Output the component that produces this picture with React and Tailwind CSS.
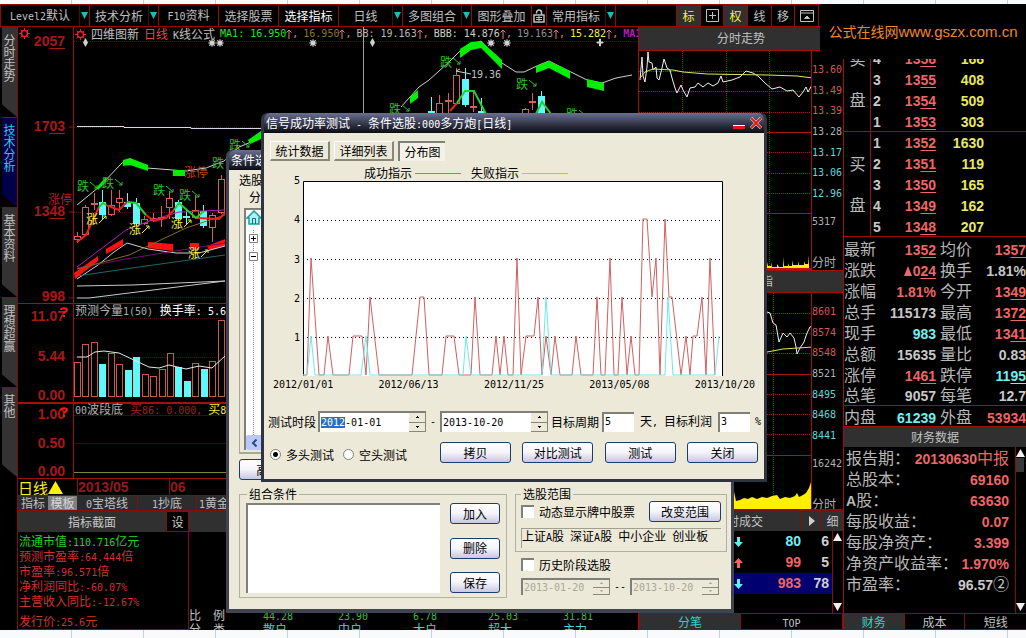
import { useEffect, useRef } from "react";
import clsx from "clsx";

const TOOLBAR_MENUS = [
    { label: "Level2默认", width: "w-[89px]", arrow: true },
    { label: "技术分析", width: "w-[69px]", arrow: true },
    { label: "F10资料", width: "w-[60px]" },
    { label: "选择股票", width: "w-[60px]" },
    { label: "选择指标", width: "w-[60px]", active: true },
    { label: "日线", width: "w-[64px]", arrow: true },
    { label: "多图组合", width: "w-[69px]", arrow: true },
    { label: "图形叠加", width: "w-[60px]" },
];

const SIDE_TABS = ["分时走势", "技术分析", "基本资料", "理想超赢", "其他"];

const MA_VALUES = [
    { name: "MA1: ", value: "16.950", color: "text-[#2ee02e]" },
    { value: "16.950", color: "text-[#8a7a2a]" },
    { name: "BB: ", value: "19.163", color: "text-[#b8b8b8]" },
    { name: "BBB: ", value: "14.876", color: "text-[#c8d0c8]" },
    { value: "19.163", color: "text-[#909090]" },
    { value: "15.282", color: "text-[#f0f040]" },
];

// [x, wick top, wick bottom, body top, body bottom, up?]
const CANDLES = [
    [75, 232, 243, 236, 240, true],
    [83, 205, 236, 207, 235, true],
    [92, 193, 210, 203, 205, true],
    [100, 190, 220, 202, 215, false],
    [109, 190, 216, 205, 215, true],
    [117, 190, 212, 198, 203, true],
    [125, 193, 209, 202, 207, false],
    [134, 198, 226, 203, 224, false],
    [142, 216, 225, 219, 224, true],
    [151, 213, 222, 218, 221, true],
    [159, 206, 227, 217, 219, true],
    [167, 191, 219, 198, 208, true],
    [176, 200, 220, 202, 219, false],
    [184, 210, 224, 216, 218, false],
    [193, 195, 219, 210, 218, true],
    [201, 205, 228, 211, 226, false],
    [210, 213, 242, 215, 228, true],
    [219, 175, 214, 179, 213, true],
    [429, 97, 114, 111, 114, false],
    [437, 95, 114, 103, 114, true],
    [446, 93, 114, 100, 102, true],
    [454, 68, 105, 75, 104, true],
    [463, 68, 107, 79, 105, false],
    [471, 92, 112, 106, 108, true],
    [479, 98, 114, 111, 114, false],
    [523, 108, 114, 109, 114, true],
    [530, 93, 110, 101, 103, true],
    [539, 91, 114, 96, 114, false],
];

const VOLUMES = [
    [361, true], [343, true], [341, true], [363, false], [352, true], [363, true],
    [369, false], [356, false], [373, true], [375, true], [368, true], [352, true],
    [366, false], [380, false], [362, true], [368, false], [360, true], [319, true],
];

const SUCCESS = [
    [304, 0], [308, 0], [312, 3], [320, 0], [325, 0], [329, 1], [334, 0], [350, 0], [354, 1], [363, 1],
    [367, 0], [371, 2], [380, 0], [413, 0], [421, 2], [425, 2], [430, 0], [443, 0], [447, 1], [455, 1],
    [460, 0], [472, 0], [476, 2], [481, 0], [493, 0], [497, 1], [501, 0], [505, 1], [509, 0], [514, 0],
    [518, 3], [522, 0], [527, 1], [535, 1], [539, 2], [543, 0], [547, 1], [552, 0], [556, 1], [561, 0],
    [573, 0], [577, 1], [582, 0], [594, 0], [598, 2], [602, 0], [606, 0], [611, 3], [615, 0], [619, 0],
    [623, 2], [628, 0], [632, 1], [636, 0], [640, 0], [644, 4], [648, 4], [653, 2], [657, 3], [661, 0],
    [666, 4], [670, 2], [673, 2], [682, 0], [687, 1], [691, 0], [694, 1], [698, 1], [703, 2], [707, 0],
    [711, 3], [716, 0],
];

const FAILURE = [
    [304, 0], [308, 0], [312, 1], [316, 0], [362, 0], [367, 1], [371, 0], [464, 0], [467, 1], [472, 0],
    [543, 0], [547, 2], [552, 0], [666, 0], [669, 2], [674, 0], [716, 0], [720, 1],
];

const SELLS = [
    [5, "1357", "92"],
    [4, "1356", "166"],
    [3, "1355", "408"],
    [2, "1354", "509"],
    [1, "1353", "303"],
];

const BUYS = [
    [1, "1352", "1630"],
    [2, "1351", "119"],
    [3, "1350", "165"],
    [4, "1349", "162"],
    [5, "1348", "207"],
];

const RED = "text-[#ee6666]";
const CYAN = "text-[#70f0f0]";
const GRAY = "text-[#c8c8c8]";

const QUOTES = [
    ["最新", "1352", RED, true, "均价", "1357", RED, true],
    ["涨跌", "▲024", RED, true, "换手", "1.81%", GRAY, false],
    ["涨幅", "1.81%", RED, false, "今开", "1349", RED, true],
    ["总手", "115173", GRAY, false, "最高", "1372", RED, true],
    ["现手", "983", CYAN, false, "最低", "1341", RED, true],
    ["总额", "15635", GRAY, false, "量比", "0.83", GRAY, false],
    ["涨停", "1461", RED, true, "跌停", "1195", CYAN, true],
    ["总笔", "9057", GRAY, false, "每笔", "12.7", GRAY, false],
    ["内盘", "61239", CYAN, false, "外盘", "53934", RED, false],
];

const FINANCE = [
    ["报告期：", "20130630中报", RED],
    ["总股本：", "69160", RED],
    ["A股：", "63630", RED],
    ["每股收益：", "0.07", RED],
    ["每股净资产：", "3.399", RED],
    ["净资产收益率：", "1.970%", RED],
    ["市盈率：", "96.57②", GRAY],
];

const MONO = "font-['DejaVu_Sans_Mono',monospace] text-[10px]";
const BIG = "font-['Liberation_Sans',sans-serif] text-[14px] font-bold";

// Chinese text keeps its own size, latin runs get a narrower face
function Mix({ children, latin = MONO }) {
    return (
        <span className="whitespace-pre">
            {children.split(/([\x20-\x7e]+)/).map((part, i) =>
                i % 2 ? <span key={i} className={clsx("leading-none", latin)}>{part}</span> : part
            )}
        </span>
    );
}

// Prices underline the last two digits
function Price({ value, mark }) {
    if (!mark) return <Mix latin={BIG}>{value}</Mix>;
    const rising = value.startsWith("▲");
    const digits = rising ? value.slice(1) : value;
    return (
        <>
            {rising && (
                <svg width="8" height="10" viewBox="0 0 8 10" className="mr-px inline-block align-baseline" aria-label="上涨">
                    <path d="M4 0L8 10H0z" fill="#ee6666" />
                </svg>
            )}
            <Mix latin={BIG}>{digits.slice(0, -2)}</Mix>
            <span className={clsx(BIG, "leading-none underline decoration-1 underline-offset-2")}>{digits.slice(-2)}</span>
        </>
    );
}

function GearIcon() {
    return (
        <svg width="11" height="11" viewBox="0 0 11 11" fill="none" stroke="#f02020" className="shrink-0">
            <circle cx="5.500" cy="5.500" r="3" strokeWidth="1.500" />
            <path d="M5.500 0v2M5.500 9v2M0 5.500h2M9 5.500h2M1.500 1.500l1.500 1.500M8 8l1.500 1.500M9.500 1.500L8 3M3 8l-1.500 1.500" />
        </svg>
    );
}

function LockIcon() {
    return (
        <svg width="12" height="14" viewBox="0 0 12 14" fill="none" stroke="#c0c0c0">
            <path d="M3.500 4.500V3.500A2.500 2.500 0 0 1 8.500 3.500V6" strokeWidth="1.500" />
            <rect x="1" y="6" width="10" height="7" strokeWidth="1.500" />
            <path d="M3 8.500h6M3 10.500h6M6 7v5" />
        </svg>
    );
}

function DropArrow() {
    return (
        <span className="flex h-full w-[10px] items-center justify-center border-l border-[#500808]">
            <svg width="7" height="7" viewBox="0 0 7 7"><path d="M0 0h7L3.500 7z" fill="#20b8b8" /></svg>
        </span>
    );
}

function Toolbar() {
    const cell = "flex items-center justify-center border-r border-[#980808]";
    return (
        <header className="flex h-[23px] border border-[#980808] bg-black text-[12px] leading-none text-[#c0c0c0]">
            {TOOLBAR_MENUS.map((m) => (
                <button key={m.label} className={clsx("flex border-r border-[#980808]", m.width, m.active && "text-white")}>
                    <span className="flex h-full flex-1 items-center justify-center"><Mix>{m.label}</Mix></span>
                    {m.arrow && <DropArrow />}
                </button>
            ))}
            <button className={clsx(cell, "w-[15px]")} aria-label="锁定"><LockIcon /></button>
            <button className="flex w-[69px] border-r border-[#980808]">
                <span className="flex h-full flex-1 items-center justify-center">常用指标</span>
                <DropArrow />
            </button>
            <div className="flex-1 border-r border-[#980808]" />
            <button className={clsx(cell, "w-[24px] bg-[#303030] text-[#f0f040]")}>标</button>
            <button className={clsx(cell, "w-[23px]")} aria-label="网格">
                <svg width="13" height="13" viewBox="0 0 13 13" fill="none" stroke="#c0c0c0"><path d="M.5.500h12v12H.5zM6.500 3v7M3 6.500h7" /></svg>
            </button>
            <button className={clsx(cell, "w-[24px] bg-[#303030] text-[#f0f040]")}>权</button>
            <button className={clsx(cell, "w-[24px]")}>线</button>
            <button className={clsx(cell, "w-[23px]")}>移</button>
            <button className={clsx(cell, "w-[24px]")} aria-label="展开">
                <svg width="14" height="12" viewBox="0 0 14 12" fill="none" stroke="#c0c0c0"><path d="M.5.500h13v11H.5zM.5 3h13" /><path d="M4.500 8.500L7 6l2.500 2.500z" fill="#c0c0c0" /></svg>
            </button>
            <div className="w-[206px]" />
        </header>
    );
}

function Sidebar() {
    return (
        <nav className="flex w-[18px] flex-col border-r border-[#801010] bg-black pl-[2px]">
            {SIDE_TABS.map((tab, i) => (
                <button
                    key={tab}
                    className={clsx(
                        "flex h-[90px] w-full items-start justify-center border-t border-[#801010] pt-[6px] text-[12px] leading-[12px]",
                        "[clip-path:polygon(0_0,100%_0,100%_100%,0_86%)]",
                        i === 1 ? "bg-[#000048] text-[#30c8e8]" : "bg-[#333333] text-[#c0c0c0]"
                    )}
                >
                    <span className="w-[12px] break-all">{tab}</span>
                </button>
            ))}
        </nav>
    );
}

function Axis({ labels, badge, className }) {
    return (
        <div className={clsx("relative flex w-[56px] shrink-0 flex-col items-end justify-between border-r border-[#a01010] pr-[8px] leading-[14px] text-[#a81818]", BIG, className)}>
            {labels.map((l) => (
                <span key={l}>
                    {l.includes(".") || l === "998" ? l : <>{l.slice(0, 2)}<u className="underline-offset-2">{l.slice(2)}</u></>}
                </span>
            ))}
            {badge}
        </div>
    );
}

function HelpBadge() {
    return (
        <svg width="8" height="10" viewBox="0 0 8 10" fill="none" className="absolute top-[3px] right-[5px]" aria-label="帮助">
            <path d="M1 3C1 .5 7 .5 7 3C7 4.500 4 4.500 4 6.500M4 8v2" stroke="#ff1818" strokeWidth="2" />
        </svg>
    );
}

function Note({ x, y, color, children, arrow }) {
    return (
        <>
            <text x={x} y={y} fill={color} fontSize="12">{children}</text>
            {arrow === "down" && <path d={`M${x + 13} ${y - 9}l7 6m-3 0h3v-3`} stroke={color} fill="none" />}
            {arrow === "up" && <path d={`M${x + 13} ${y - 1}l7 -7m-3 0h3v3`} stroke={color} fill="none" />}
        </>
    );
}

function CandleChart() {
    return (
        <svg className="block h-[262px] w-full" aria-label="K线图">
            {/* chart is drawn in page units, moved back to its own corner */}
            <g transform="translate(-75 -41)" fill="none">
                <path d="M75 41.500H640M75 127.500H640M75 212.500H640M75 297.500H640" stroke="#5a0808" strokeDasharray="1 1" />
                <path d="M70 127h5M70 212h5M70 298h5" stroke="#a01010" />
                <path d="M364.500 27V115" stroke="#a0a0a0" />
                <path d="M78 126.500H125V127.500H192V128.500H262" stroke="#d8d8e8" />

                {CANDLES.map(([x, wt, wb, bt, bb, up]) => (
                    <g key={x} stroke={up ? "#d86050" : "#60f8f8"}>
                        <path d={`M${x + 3.5} ${wt}V${bt}M${x + 3.5} ${bb}V${wb}`} />
                        <rect x={x + 0.5} y={bt + 0.5} width="6" height={Math.max(bb - bt - 1, 1)} fill={up ? "#000" : "#60f8f8"} />
                    </g>
                ))}

                <path d="M78 205L100 187L123 163L131 159L148 168L174 170L187 171L207 168L225 161L240 147L262 138" stroke="#d0d0d0" />
                <path d="M402 107L420 87L430 80L450 62L462 50L482 41L503 63L517 72L525 72L540 65L550 61L570 71L588 80L603 83L617 78L633 75" stroke="#d0d0d0" />
                <g fill="#00f000">
                    <path d="M98 187L107 177V182L99 190Z" />
                    <path d="M124 160L131 158L149 165V171L131 165L124 166Z" />
                    <path d="M174 170H186V176H174Z" />
                    <path d="M249 140L262 131V139L251 144Z" />
                    <path d="M411 97L419 90V98L411 104Z" />
                    <path d="M461 49L472 42L482 41L503 60V69L482 48L472 50L461 58Z" />
                    <path d="M537 66L550 61L571 71V79L550 68L537 73Z" />
                    <path d="M588 79L605 83V91L588 87Z" />
                </g>
                <g fill="#ff1010">
                    <path d="M75 273L99 256V261L76 279Z" />
                    <path d="M107 249L124 239V245L107 254Z" />
                    <path d="M149 242L174 244V251L149 248Z" />
                    <path d="M191 243H200V250H191Z" />
                    <path d="M208 246L226 239V246L210 250Z" />
                </g>
                <path d="M78 279L99 265L115 252L128 243L149 249L177 253L200 253L226 246" stroke="#d0d0d0" />
                <path d="M78 267L127 230L153 220L180 212L203 211L226 210" stroke="#b020b0" />
                <path d="M78 268L133 258L226 243" stroke="#701070" />
                <path d="M78 269L130 255L187 228L226 215" stroke="#807020" />
                <path d="M78 276L133 268L226 255" stroke="#206868" />
                <path d="M78 286L133 285L226 281M78 298H90L226 281" stroke="#c8c8c8" />
                <g strokeWidth="2">
                    <path d="M78 242L87 235L100 207M107 205L120 210L128 202M147 215L155 221L167 218L175 210M198 218L220 219L226 213M451 111L458 103" stroke="#e82020" />
                    <path d="M100 207L104 203L107 205M128 202L137 203L147 215M175 210L180 203L197 218L205 211M458 103L466 91L475 91L487 114M537 114L543 102L552 114" stroke="#20d030" />
                </g>

                <g fill="#d0d0d0">
                    <path d="M86.500 38l2.500 4.500l-2.500 4.500l-2.500 -4.500z" />
                    <path d="M373.500 38l2.500 4.500l-2.500 4.500l-2.500 -4.500z" />
                    {[213, 221, 314, 492, 508].map((x) => (
                        <path key={x} d={`M${x - 2} 41h4v4h-4zM${x} 39v8M${x - 4} 43h8M${x - 3} 40l6 6M${x + 3} 40l-6 6`} stroke="#d0d0d0" strokeWidth="0.8" />
                    ))}
                    <path d="M598 42h6v1h-6zM600.500 39h1v7h-1z" stroke="#d0d0d0" />
                </g>

                <Note x={78} y={191} color="#30c030" arrow="down">跌</Note>
                <Note x={103} y={188} color="#30c030" arrow="down">跌</Note>
                <Note x={154} y={195} color="#30c030" arrow="down">跌</Note>
                <Note x={180} y={200} color="#30c030" arrow="down">跌</Note>
                <Note x={213} y={168} color="#30c030" arrow="down">跌</Note>
                <Note x={230} y={150} color="#30c030" arrow="down">跌</Note>
                <Note x={390} y={114} color="#30c030" arrow="down">跌</Note>
                <Note x={441} y={67} color="#30c030" arrow="down">跌</Note>
                <Note x={517} y={89} color="#30c030" arrow="down">跌</Note>
                <Note x={567} y={119} color="#30c030" arrow="down">跌</Note>
                <Note x={49} y={204} color="#b02020">涨停</Note>
                <Note x={185} y={177} color="#c04010">涨停</Note>
                <Note x={87} y={224} color="#f0f040" arrow="up">涨</Note>
                <Note x={130} y={234} color="#f0f040" arrow="up">涨</Note>
                <Note x={172} y={228} color="#f0f040" arrow="up">涨</Note>
                <Note x={189} y={258} color="#f0f040" arrow="up">涨</Note>
                <path d="M457 71L472 74M457 71l4 -2" stroke="#d0d0d0" />
                <text x="472" y="78" fill="#c0c0c0" className={MONO}>19.36</text>
            </g>
        </svg>
    );
}

function VolumeChart() {
    return (
        <svg className="block h-[84px] w-full" aria-label="成交量">
            <g transform="translate(-75 -317)" fill="none">
                <path d="M75 317.500H640M75 356.500H640" stroke="#500808" strokeDasharray="1 1" />
                {VOLUMES.map(([top, up], i) => (
                    <rect
                        key={i}
                        x={75.5 + Math.round(i * 8.45)}
                        y={top + 0.5}
                        width="6"
                        height={395 - top}
                        stroke={up ? "#c85848" : "#60f8f8"}
                        fill={up ? "#000" : "#60f8f8"}
                    />
                ))}
                <path d="M78 356H88L96 351L105 350L120 352L137 360L150 366L160 367L170 364L187 368L200 365L213 367L226 355" stroke="#e8e8e8" />
            </g>
        </svg>
    );
}

function ChartArea() {
    return (
        <main className="flex min-w-0 flex-1 flex-col overflow-hidden">
            <section className="flex h-[276px]">
                <Axis
                    labels={["2057", "1703", "1348", "998"]}
                    className="pt-[7px]"
                    badge={<span className="absolute top-px left-px"><GearIcon /></span>}
                />
                <div className="min-w-0 flex-1 [&_svg]:overflow-visible">
                    <div className="flex h-[14px] items-center gap-[5px] pl-[1px] text-[12px] leading-none whitespace-nowrap text-[#c0c0c0]">
                        <GearIcon />
                        <span>四维图新</span>
                        <span className="text-[#d85050]">日线</span>
                        <Mix>K线公式</Mix>
                        <div className={clsx("flex", MONO)}>
                            {MA_VALUES.map((m, i) => (
                                <span key={i} className={clsx("flex whitespace-pre", m.color)}>
                                    {m.name}{m.value}
                                    <span className="flex w-[17px] text-[#e08080]">
                                        <svg width="6" height="10" viewBox="0 0 6 10" fill="none" stroke="#e08080"><path d="M3 10V1M.5 3.500L3 1l2.500 2.500" /></svg>,
                                    </span>
                                </span>
                            ))}
                            <span className="font-bold text-[#b020b0]">MA1</span>
                        </div>
                    </div>
                    <CandleChart />
                </div>
            </section>

            <section className="flex h-[99px] border-t border-[#a01010]">
                <Axis labels={["11.07", "5.44", "0.00"]} className="pt-[5px]" badge={<HelpBadge />} />
                <div className="min-w-0 flex-1">
                    <div className="h-[14px] pl-[1px] text-[12px] leading-[12px] whitespace-nowrap text-[#b0b0b0]">
                        <Mix>预测今量1(50)</Mix> <span className="ml-1 text-white"><Mix>换手率: 5.68</Mix></span>
                    </div>
                    <VolumeChart />
                </div>
            </section>

            <section className="flex h-[76px] border-t-2 border-[#a01010]">
                <Axis labels={["1.00", "0.50", "0.00"]} className="pt-[3px]" badge={<HelpBadge />} />
                <div className="flex min-w-0 flex-1 flex-col">
                    <div className="h-[11px] pl-[1px] text-[12px] leading-[10px] whitespace-nowrap text-[#b0b0b0]">
                        <Mix>00波段底</Mix>
                        <span className="ml-[7px] text-[#a02020]"><Mix>买86: 0.000, </Mix></span>
                        <span className="text-[#f0f040]"><Mix>买84: 0.000</Mix></span>
                    </div>
                    <div className="h-[29px] border-t border-b border-[#400808]" />
                    <div className="h-[29px] border-b border-[#808040]" />
                </div>
            </section>

            <div className="flex h-[17px] items-center border-t border-[#a01010] text-[#f8f020]">
                <button className="flex w-[59px] items-center text-[15px] leading-none">
                    日线
                    <svg width="15" height="13" viewBox="0 0 15 13"><path d="M7.500 0L15 13H0z" fill="#fff000" /></svg>
                </button>
                <span className={clsx(BIG, "w-[92px] border-l border-[#801010] leading-[16px] text-[#981818]")}>2013/05</span>
                <span className={clsx(BIG, "border-l border-[#801010] leading-[16px] text-[#981818]")}>06</span>
            </div>

            <div className="flex h-[15px] border-t border-[#801010] bg-[#2c2c2c] text-[12px] leading-[14px] whitespace-nowrap text-[#c0c0c0]">
                <button className="w-[30px]">指标</button>
                <button className="w-[29px] bg-[#808080] text-[#d8d8d8]">模板</button>
                <button className="w-[61px] border-r border-[#801010]"><Mix>0宝塔线</Mix></button>
                <button className="w-[59px] border-r border-[#801010]"><Mix>1抄底</Mix></button>
                <button className="pl-[2px]"><Mix>1黄金线</Mix></button>
            </div>

            <div className="flex h-[22px] items-center border-t border-[#801010] bg-[#303030] text-[12px] text-[#c8c8c8]">
                <h2 className="w-[148px] text-center">指标截面</h2>
                <button className="h-full w-[23px] border border-[#801010] bg-black">设</button>
            </div>

            <div className="flex h-[98px] overflow-hidden">
                <div className="w-[171px] border-r border-b border-[#801010] pt-[1px] pl-[1px] text-[12px] leading-[15px] text-[#d03030]">
                    <p className="text-[#28d028]"><Mix>流通市值:110.716亿元</Mix></p>
                    <p><Mix>预测市盈率:64.444倍</Mix></p>
                    <p><Mix>市盈率:96.571倍</Mix></p>
                    <p><Mix>净利润同比:-60.07%</Mix></p>
                    <p><Mix>主营收入同比:-12.67%</Mix></p>
                    <p className="mt-[5px]"><Mix>发行价:25.6元</Mix></p>
                </div>
                <div className="pt-[76px]">
                    <table className="table-fixed border-collapse text-left text-[12px] leading-[14px]">
                        <tbody>
                            <tr className="h-[14px] text-[#30c030]">
                                <th className="w-[74px] p-0 font-normal text-[#c0c0c0]">比　例</th>
                                {["44.28", "23.90", "6.78", "25.03", "31.81"].map((v) => (
                                    <td key={v} className="w-[75px] p-0"><Mix>{v}</Mix></td>
                                ))}
                            </tr>
                            <tr className="h-[14px] text-[#40d8d8]">
                                <th className="p-0 font-normal text-[#c0c0c0]">分　类</th>
                                {["散户", "中户", "大户", "超大", "主力"].map((v) => <td key={v} className="p-0">{v}</td>)}
                            </tr>
                        </tbody>
                    </table>
                </div>
            </div>
        </main>
    );
}

function MiniLabels({ labels, volume, className }) {
    return (
        <div className={clsx("w-[32px] shrink-0 border-l border-[#a01010] text-[12px] leading-none text-[#b0b0b0]", className)}>
            <ul className={clsx("flex h-[134px] flex-col justify-between", MONO)}>
                {labels.map(([v, color]) => <li key={v} className={color}>{v}</li>)}
            </ul>
            <p className={clsx("mt-[18px]", MONO)}>{volume}</p>
            <p className="mt-[29px]">分时</p>
        </div>
    );
}

function MiniColumn() {
    const red = "text-[#d05858]";
    const cyan = "text-[#60d8d8]";
    return (
        <section className="flex w-[205px] shrink-0 flex-col border-l border-[#a01010] text-[12px]">
            <h2 className="h-[23px] bg-[#303030] text-center leading-[22px] text-[#c0c0c0]">分时走势</h2>
            <div className="flex h-[220px] border-t border-[#a01010]">
                <svg className="block h-full flex-1" aria-label="分时走势">
                    <g transform="translate(-639 -51)" fill="none">
                        <path d="M639 71.500H813M639 91.500H813M639 112.500H813M639 152.500H813M639 173.500H813M639 193.500H813M682.500 51V270M726.500 51V270M769.500 51V270" stroke="#b01818" strokeDasharray="1 1" />
                        <path d="M639 132.500H813M639 213.500H813" stroke="#a01818" />
                        <path d="M640 80L642 57L643 76L645 82L647 67L648 52L649 62L652 63L653 70L656 67L657 78L659 80L662 68L664 59L667 68L670 70L672 78L675 88L677 93L681 85L683 90L687 97L690 88L695 87L698 83L703 87L708 83L713 86L718 83L721 76L723 82L732 80L740 77L746 71L753 73L758 76L765 83L772 89L780 87L787 91L793 90L799 97L803 92L806 87L808 92L812 85" stroke="#f0f0f0" />
                        <path d="M640 78L645 72L653 69L673 70L683 72L707 74L767 75L797 76L813 78" stroke="#e8e060" />
                        <path d="M767 268V262l1 4h3v-4l1 5h5v-3l2 3h4v-10l1 9h4v-3l1 3h3v-6l1 5h5v-4l1 4h5v-4l1 3h3v-9l1 10v4z" fill="#fff000" />
                        <path d="M639 269H813" stroke="#c01010" strokeWidth="2" />
                    </g>
                </svg>
                <MiniLabels
                    className="pt-[14px]"
                    volume="5317"
                    labels={[["13.60", red], ["13.49", red], ["13.39", red], ["13.28", ""], ["13.17", cyan], ["13.06", cyan], ["12.96", cyan]]}
                />
            </div>
            <h2 className="h-[22px] border-t border-[#a01010] bg-[#303030] pr-[70px] text-right leading-[20px] text-[#c0c0c0]">大盘领先指</h2>
            <div className="flex h-[217px] border-t border-[#a01010]">
                <svg className="block h-full flex-1" aria-label="大盘走势">
                    <g transform="translate(-639 -293)" fill="none">
                        <path d="M639 313.500H813M639 333.500H813M639 353.500H813M639 394.500H813M639 414.500H813M639 434.500H813M773.500 293V509" stroke="#b01818" strokeDasharray="1 1" />
                        <path d="M639 374.500H813M639 455.500H813" stroke="#a01818" />
                        <path d="M767 312L770 313L773 323L776 325L779 342L783 333L787 337L790 333L794 338L796 347L797 354L800 348L804 342L807 333L810 327L813 326" stroke="#f0f0f0" />
                        <path d="M767 352L783 349L813 347" stroke="#e8e060" />
                        <path d="M733 509V487L736 501L740 500L744 498L748 499L752 497L757 499L762 497L767 498L772 496L777 495L780 499L785 497L790 498L795 496L797 493L799 497L803 495L806 493L809 488L811 482L811 466H813V509Z" fill="#fff000" />
                    </g>
                </svg>
                <MiniLabels
                    className="pt-[14px]"
                    volume="16242"
                    labels={[["8601", red], ["8574", red], ["8548", red], ["8521", ""], ["8495", cyan], ["8468", cyan], ["8441", cyan]]}
                />
            </div>
            <div className="flex h-[22px] items-center border-t-2 border-[#801010] bg-[#303030] text-[#c0c0c0]">
                <h2 className="flex-1 pr-[38px] text-right">分时成交</h2>
                <button className="flex h-full w-[20px] items-center justify-center border-l border-[#801010]" aria-label="下一页">
                    <svg width="6" height="10" viewBox="0 0 6 10"><path d="M0 0L6 5L0 10z" fill="#d0d0d0" /></svg>
                </button>
                <button className="h-full w-[22px] border-l border-[#801010]">细</button>
            </div>
            <div className="flex flex-1">
                <div className="flex-1 border-r border-[#801010]">
                    <table className={clsx("w-full border-collapse", BIG)}>
                        <tbody>
                            {[["80", "6", false], ["99", "5", true], ["983", "78", false]].map(([vol, n, up], i) => (
                                <tr key={vol} className={clsx("h-[21px]", i === 2 && "bg-[#000070]")}>
                                    <td className="p-0 pl-[95px]">
                                        <svg width="9" height="10" viewBox="0 0 9 10" className={up ? "" : "rotate-180"}>
                                            <path d="M4.500 0L9 5H6v5H3V5H0z" fill={up ? "#ff6060" : "#60f0f0"} />
                                        </svg>
                                    </td>
                                    <td className={clsx("p-0 text-right", i === 0 ? CYAN : RED)}>{vol}</td>
                                    <td className="w-[31px] p-0 pr-[3px] text-right text-[#d0d0d0]">{n}</td>
                                </tr>
                            ))}
                        </tbody>
                    </table>
                </div>
                <ScrollArrows />
            </div>
            <div className="flex h-[17px] border border-[#801010] leading-[15px] text-[#c0c0c0]">
                <button className="w-1/2 border-r border-[#801010] bg-[#303030] text-[#30d0d0]">分笔</button>
                <button className="w-1/2"><Mix>TOP</Mix></button>
            </div>
        </section>
    );
}

function ScrollArrows({ thumb }) {
    return (
        <div className="flex w-[10px] flex-col py-[2px]">
            <svg width="9" height="8" viewBox="0 0 9 8"><path d="M4.500 0L9 8H0z" fill="#f0f0f0" /></svg>
            {thumb && <span className="mt-[1px] h-[14px] w-[8px] bg-[#383838]" />}
            <svg width="9" height="8" viewBox="0 0 9 8" className="mt-auto"><path d="M0 0H9L4.500 8z" fill="#f0f0f0" /></svg>
        </div>
    );
}

function OrderBook({ side, rows }) {
    return (
        <div className="flex h-[105px] border-b border-[#a01010]">
            <div className="flex w-[27px] flex-col justify-evenly border-r border-[#a01010] pl-[1px] text-center text-[16px] leading-[21px] text-[#b8b8b8]">
                <span>{side}</span>
                <span>盘</span>
            </div>
            <table className={clsx("border-collapse", BIG)}>
                <tbody>
                    {rows.map(([level, price, volume]) => (
                        <tr key={level} className="h-[21px] leading-[20px]">
                            <td className="w-[18px] p-0 pl-[2px] text-[#c8c8c8]">{level}</td>
                            <td className={clsx("w-[47px] p-0 text-right", RED)}><Price value={price} mark /></td>
                            <td className="w-[48px] p-0 text-right text-[#e8e860]">{volume}</td>
                        </tr>
                    ))}
                </tbody>
            </table>
        </div>
    );
}

function QuoteColumn() {
    return (
        <aside className="flex w-[183px] shrink-0 flex-col border-l border-[#a01010] text-[16px] text-[#b8b8b8]">
            <OrderBook side="卖" rows={SELLS} />
            <OrderBook side="买" rows={BUYS} />
            <table className="w-full table-fixed border-collapse border-b border-[#a01010] leading-[20px]">
                <tbody>
                    {QUOTES.map(([l1, v1, c1, m1, l2, v2, c2, m2]) => (
                        <tr key={l1} className="h-[21px] last:border-t last:border-[#a01010]">
                            <th className="w-[34px] p-0 text-left font-normal">{l1}</th>
                            <td className={clsx("w-[58px] p-0 text-right whitespace-nowrap", c1)}><Price value={v1} mark={m1} /></td>
                            <th className="w-[38px] p-0 pl-[4px] text-left font-normal">{l2}</th>
                            <td className={clsx("p-0 text-right whitespace-nowrap", c2)}><Price value={v2} mark={m2} /></td>
                        </tr>
                    ))}
                </tbody>
            </table>
            <h2 className="h-[20px] bg-[#303030] text-center text-[12px] leading-[19px] text-[#c0c0c0]">财务数据</h2>
            <div className="flex flex-1">
                <div className="min-w-0 flex-1">
                    <table className="w-full table-fixed border-collapse leading-[20px]">
                        <tbody>
                            {FINANCE.map(([label, value, color]) => (
                                <tr key={label} className="h-[21px]">
                                    <th className="w-[68px] p-0 pl-[2px] text-left font-normal whitespace-nowrap"><Mix latin={BIG}>{label}</Mix></th>
                                    <td className={clsx("p-0 pr-[6px] text-right whitespace-nowrap", color)}><Mix latin={BIG}>{value}</Mix></td>
                                </tr>
                            ))}
                        </tbody>
                    </table>
                </div>
                <div className="flex border-l border-[#801010]"><ScrollArrows thumb /></div>
            </div>
            <div className="flex h-[17px] border-t border-b border-[#801010] text-[12px] leading-[15px] text-[#c0c0c0]">
                <button className="w-1/3 border-r border-[#801010] bg-[#303030] text-[#30d0d0]">财务</button>
                <button className="w-1/3 border-r border-[#801010]">成本</button>
                <button className="w-1/3">短线</button>
            </div>
        </aside>
    );
}

function XpButton({ children, className }) {
    return (
        <button className={clsx("h-[21px] shrink-0 rounded-[3px] border border-[#1c3c6c] bg-linear-to-b from-white via-[#f4f4fa] to-[#c8c8e0] text-[12px] leading-none", className)}>
            {children}
        </button>
    );
}

function Spinner({ disabled }) {
    const half = "flex flex-1 items-center justify-center border-r border-b border-[#888878] bg-[#ece9d8]";
    return (
        <span className="flex w-[17px] shrink-0 flex-col">
            <button className={half} disabled={disabled} aria-label="增加"><svg width="3" height="2" viewBox="0 0 3 2"><path d="M1 0h1v1h1v1H0V1h1z" fill={disabled ? "#b0b0a0" : "#000"} /></svg></button>
            <button className={half} disabled={disabled} aria-label="减少"><svg width="3" height="2" viewBox="0 0 3 2"><path d="M0 0h3v1H2v1H1V1H0z" fill={disabled ? "#b0b0a0" : "#000"} /></svg></button>
        </span>
    );
}

function DateBox({ label, value, inputRef, disabled, className }) {
    return (
        <div className={clsx("flex shrink-0 border-t-2 border-l-2 border-[#808078]", disabled ? "bg-[#ece9d8]" : "bg-white", className)}>
            <input
                ref={inputRef}
                aria-label={label}
                defaultValue={value}
                disabled={disabled}
                className={clsx(MONO, "w-full min-w-0 bg-transparent pl-[1px] outline-none selection:bg-[#316ac5] selection:text-white disabled:text-[#a8a898]")}
            />
            <Spinner disabled={disabled} />
        </div>
    );
}

function TitleBar({ children, controls }) {
    return (
        <div className="flex h-[20px] items-center rounded-t-[6px] bg-linear-to-b from-[#6a7090] via-[#383c50] to-[#0c0c14] pl-[2px] text-[12px] leading-none text-white">
            <h1 className="flex-1 leading-[18px] whitespace-nowrap"><Mix>{children}</Mix></h1>
            {controls && (
                <div className="flex items-center gap-[4px] pr-[2px]">
                    <button aria-label="最小化"><svg width="13" height="12" viewBox="0 0 13 12"><path d="M0 9h12v3H0z" fill="#e01818" /><path d="M0 8.500h12" stroke="#fff" /></svg></button>
                    <button aria-label="关闭窗口"><svg width="12" height="12" viewBox="0 0 12 12"><path d="M1 1l10 10M11 1L1 11" stroke="#fff" strokeWidth="3" /><path d="M1 1l10 10M11 1L1 11" stroke="#d81818" strokeWidth="2" /></svg></button>
                </div>
            )}
        </div>
    );
}

function TreePanel() {
    return (
        <div className="mt-[2px] h-[265px] border-b-2 border-l border-[#a8a898] pt-[1px] pl-[4px]">
            <p className="pl-[5px] text-[12px] leading-[14px]">分类</p>
            <div className="mt-[4px] flex h-[242px] flex-col border-t-2 border-l-2 border-[#808078] bg-white">
                <svg width="20" height="225" viewBox="0 0 20 225" fill="none" className="shrink-0">
                    <path d="M7.500 20V225" stroke="#909090" strokeDasharray="1 1" />
                    <path d="M1 8L8 1L15 8L13 8V14H3V8z" fill="#b0f0f0" stroke="#10a0a0" strokeWidth="1.500" />
                    <path d="M6.500 14V8.500h3V14" stroke="#107080" />
                    <path d="M3.500 24.500h8v8h-8zM3.500 42.500h8v8h-8z" fill="#fff" stroke="#808080" />
                    <path d="M5 28.500h5M7.500 26v5M5 46.500h5" stroke="#000" />
                </svg>
                <button className="flex h-[15px] w-[16px] items-center justify-center rounded-[2px] bg-[#b8c8f8]" aria-label="向左滚动">
                    <svg width="7" height="8" viewBox="0 0 7 8"><path d="M5.500 0.500L2 4L5.500 7.500" fill="none" stroke="#304878" strokeWidth="2" /></svg>
                </button>
            </div>
        </div>
    );
}

function PickerWindow() {
    const group = "border border-[#b0b0a0]";
    const check = "h-[13px] w-[13px] appearance-none border-t-2 border-l-2 border-[#808078] bg-white";
    return (
        <div className="absolute top-[150px] left-[226px] w-[508px] rounded-t-[6px] bg-[#404450] px-[3px] pb-[4px] text-[12px] leading-none text-black">
            <TitleBar>条件选股</TitleBar>
            <div className="bg-[#ece9d8] px-[10px] pt-[3px] pb-[11px]">
                <p className="leading-[14px]">选股条件</p>
                <TreePanel />
                <XpButton className="mt-[5px] w-[72px]">高级&gt;&gt;</XpButton>
                <div className="mt-[8px] flex gap-[8px]">
                    <fieldset className={clsx(group, "w-[268px] px-[6px] pb-[4px]")}>
                        <legend className="ml-[1px] px-[2px]">组合条件</legend>
                        <div className="mt-[3px] flex justify-between">
                            <textarea aria-label="组合条件" className="h-[90px] w-[194px] resize-none border-t-2 border-l-2 border-[#808078] bg-white" />
                            <div className="flex flex-col justify-between">
                                <XpButton className="w-[50px]">加入</XpButton>
                                <XpButton className="w-[50px]">删除</XpButton>
                                <XpButton className="w-[50px]">保存</XpButton>
                            </div>
                        </div>
                    </fieldset>
                    <div className="min-w-0 flex-1">
                        <fieldset className={clsx(group, "-mr-[6px] px-[5px] pb-[3px]")}>
                            <legend className="px-[2px]">选股范围</legend>
                            <div className="mt-[1px] flex items-center gap-[5px]">
                                <input id="dynamic" type="checkbox" className={check} />
                                <label htmlFor="dynamic" className="flex-1">动态显示牌中股票</label>
                                <XpButton className="w-[72px]">改变范围</XpButton>
                            </div>
                            <div className="mt-[6px] h-[20px] border-t border-l border-[#a0a090] leading-[14px] whitespace-nowrap">
                                <Mix>上证A股 深证A股 中小企业 创业板</Mix>
                            </div>
                        </fieldset>
                        <div className="mt-[6px] flex items-center gap-[5px] pl-[6px]">
                            <input id="history" type="checkbox" className={check} />
                            <label htmlFor="history">历史阶段选股</label>
                        </div>
                        <div className="mt-[7px] flex items-center gap-[3px] pl-[6px]">
                            <DateBox label="阶段开始" value="2013-01-20" disabled className="h-[17px] w-[89px]" />
                            <span className={clsx(MONO, "w-[14px] text-center")}>--</span>
                            <DateBox label="阶段结束" value="2013-10-20" disabled className="h-[17px] w-[89px]" />
                        </div>
                    </div>
                </div>
            </div>
        </div>
    );
}

function toPoints(series) {
    return series.map(([x, v]) => `${x - 304},${194 - v * 39}`).join(" ");
}

function DistributionChart() {
    return (
        <div className="mx-auto w-[482px]">
            <div className="flex gap-[10px] pl-[91px]">
                <span className="flex items-center gap-[3px]">成功指示<i className="block w-[46px] border-t border-[#e06060]" /></span>
                <span className="flex items-center gap-[3px]">失败指示<i className="block w-[46px] border-t border-[#50e0e0]" /></span>
            </div>
            <div className="mt-[2px] flex">
                <ul className={clsx("-mt-[5px] flex h-[167px] w-[30px] flex-col justify-between pr-[3px] text-right", MONO)}>
                    {[5, 4, 3, 2, 1].map((n) => <li key={n}>{n}</li>)}
                </ul>
                <svg width="420" height="195" viewBox="0 0 420 195" fill="none" className="bg-white" aria-label="分布图">
                    <path d="M0 39.500H420M0 78.500H420M0 117.500H420M0 156.500H420" stroke="#000" strokeDasharray="1 3" />
                    <path d="M.5 195V.5H419.500V195" stroke="#000" />
                    <polyline points={toPoints(SUCCESS)} stroke="#d06060" />
                    <polyline points={toPoints(FAILURE)} stroke="#70e8e8" />
                </svg>
            </div>
            <div className={clsx("mt-[4px] flex justify-between", MONO)}>
                {["2012/01/01", "2012/06/13", "2012/11/25", "2013/05/08", "2013/10/20"].map((d) => <span key={d}>{d}</span>)}
            </div>
        </div>
    );
}

function TestWindow() {
    const startRef = useRef(null);

    // the year part of the start date is selected when the window opens
    useEffect(() => {
        startRef.current.focus();
        startRef.current.setSelectionRange(0, 4);
    }, []);

    const tab = "h-[20px] border-r-2 border-b-2 border-[#888878] border-t border-l border-t-white border-l-white";
    const box = "h-[20px] w-[32px] border-t-2 border-l-2 border-[#808078] bg-white pb-[2px] pl-[1px] outline-none";
    const radio = "h-[11px] w-[11px] appearance-none rounded-full border border-[#808078] bg-white checked:bg-[radial-gradient(#000_2px,#fff_3px)]";
    return (
        <div className="absolute top-[113px] left-[261px] w-[506px] rounded-t-[6px] bg-[#303440] px-[3px] pb-[3px] text-[12px] leading-none text-black">
            <TitleBar controls>信号成功率测试 - 条件选股:000多方炮[日线]</TitleBar>
            <div className="bg-[#ece9d8] pt-[8px] pb-[16px]">
                <div className="flex gap-[4px] pl-[6px]">
                    <button className={clsx(tab, "w-[60px]")}>统计数据</button>
                    <button className={clsx(tab, "w-[60px]")}>详细列表</button>
                    <button className="h-[20px] w-[47px] border-t-2 border-l-2 border-[#808078] bg-[#f4f2e8]">分布图</button>
                </div>
                <div className="mt-[6px]"><DistributionChart /></div>
                <div className="mt-[21px] flex items-center pl-[4px]">
                    <span className="mr-[2px]">测试时段</span>
                    <DateBox label="测试开始" value="2012-01-01" inputRef={startRef} className="h-[21px] w-[108px]" />
                    <span className={clsx(MONO, "w-[14px] text-center")}>-</span>
                    <DateBox label="测试结束" value="2013-10-20" className="h-[21px] w-[108px]" />
                    <label htmlFor="period" className="mx-[3px]">目标周期</label>
                    <input id="period" defaultValue="5" className={clsx(box, MONO)} />
                    <label htmlFor="profit" className="mx-[6px]"><Mix>天, 目标利润</Mix></label>
                    <input id="profit" defaultValue="3" className={clsx(box, MONO)} />
                    <span className={clsx(MONO, "ml-[5px]")}>%</span>
                </div>
                <div className="mt-[10px] flex items-center pr-[6px] pl-[6px]">
                    <div className="flex w-[170px] items-center gap-[5px] pt-[4px]">
                        <input id="long" name="direction" type="radio" defaultChecked className={radio} />
                        <label htmlFor="long" className="mr-[4px]">多头测试</label>
                        <input id="short" name="direction" type="radio" className={radio} />
                        <label htmlFor="short">空头测试</label>
                    </div>
                    <div className="flex flex-1 justify-between">
                        <XpButton className="w-[71px]">拷贝</XpButton>
                        <XpButton className="w-[71px]">对比测试</XpButton>
                        <XpButton className="w-[71px]">测试</XpButton>
                        <XpButton className="w-[71px]">关闭</XpButton>
                    </div>
                </div>
            </div>
        </div>
    );
}

export default function App() {
    return (
        <div className="relative flex min-h-screen flex-col overflow-hidden bg-[repeating-linear-gradient(90deg,#f8fafc_0_71px,#c4d0e0_71px_72px)] pt-[4px] font-['Noto_Sans_CJK_SC',sans-serif]">
            <div className="flex flex-col bg-black">
                <Toolbar />
                <div className="flex">
                    <Sidebar />
                    <ChartArea />
                    <MiniColumn />
                    <QuoteColumn />
                </div>
            </div>

            <PickerWindow />
            <TestWindow />

            {/* Site banner over the corner */}
            <a
                href="#"
                className="absolute top-[4px] right-0 flex h-[55px] w-[206px] items-center justify-center bg-black text-[14px] leading-none whitespace-nowrap text-[#f08828]"
            >
                <Mix latin="font-['Liberation_Sans',sans-serif] text-[15px]">公式在线网www.gszx.com.cn</Mix>
            </a>
        </div>
    );
}
